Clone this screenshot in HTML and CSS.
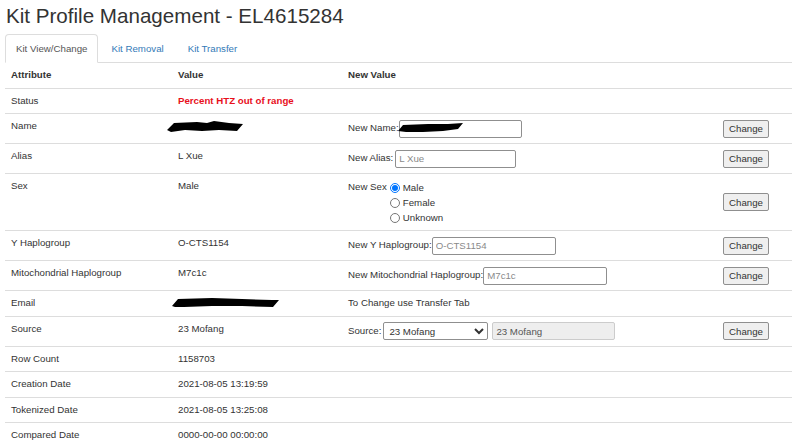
FILE: index.html
```html
<!DOCTYPE html>
<html>
<head>
<meta charset="utf-8">
<link rel="stylesheet" href="styles.css">
</head>
<body>
<div class="page">
  <h1 class="title">Kit Profile Management - EL4615284</h1>
  <ul class="tabs">
    <li class="tab active"><a>Kit View/Change</a></li>
    <li class="tab"><a>Kit Removal</a></li>
    <li class="tab"><a>Kit Transfer</a></li>
  </ul>
  <table class="grid">
    <colgroup>
      <col class="c1"><col class="c2"><col class="c3"><col class="c4">
    </colgroup>
    <thead>
      <tr><th>Attribute</th><th>Value</th><th>New Value</th><th></th></tr>
    </thead>
    <tbody>
      <tr><td>Status</td><td class="bad">Percent HTZ out of range</td><td></td><td></td></tr>
      <tr>
        <td>Name</td>
        <td class="redact-cell"><svg class="blob b1" width="80" height="12" viewBox="0 0 80 12"><polygon points="0,9 7,2 30,1 40,2 47,0 62,2 76,3 70,10 52,9 35,10 18,9 4,11" fill="#000"/></svg></td>
        <td><div class="row"><span>New Name:</span><span class="wrap"><input class="inp w122" type="text"><svg class="blob b2" width="66" height="10" viewBox="0 0 66 10"><polygon points="0,8 5,2 30,1 50,1 65,0 60,6 45,8 25,9 8,9" fill="#000"/></svg></span></div></td>
        <td class="act"><button class="btn">Change</button></td>
      </tr>
      <tr>
        <td>Alias</td><td>L Xue</td>
        <td><div class="row"><span>New Alias:</span><input class="inp w120 gap" type="text" placeholder="L Xue"></div></td>
        <td class="act"><button class="btn">Change</button></td>
      </tr>
      <tr>
        <td>Sex</td><td>Male</td>
        <td>
          <div class="sex">
            <span>New Sex</span>
            <div class="radios">
              <label class="rad"><input type="radio" name="sex" checked> Male</label>
              <label class="rad"><input type="radio" name="sex"> Female</label>
              <label class="rad"><input type="radio" name="sex"> Unknown</label>
            </div>
          </div>
        </td>
        <td class="act"><button class="btn">Change</button></td>
      </tr>
      <tr>
        <td>Y Haplogroup</td><td>O-CTS1154</td>
        <td><div class="row"><span>New Y Haplogroup:</span><input class="inp w123" type="text" placeholder="O-CTS1154"></div></td>
        <td class="act"><button class="btn">Change</button></td>
      </tr>
      <tr>
        <td>Mitochondrial Haplogroup</td><td>M7c1c</td>
        <td><div class="row"><span>New Mitochondrial Haplogroup:</span><input class="inp w123" type="text" placeholder="M7c1c"></div></td>
        <td class="act"><button class="btn">Change</button></td>
      </tr>
      <tr>
        <td>Email</td>
        <td class="redact-cell"><svg class="blob b3" width="108" height="11" viewBox="0 0 108 11"><polygon points="0,9 6,2 40,1 70,2 100,3 107,3 101,10 70,9 40,9 12,10 3,10" fill="#000"/></svg></td>
        <td>To Change use Transfer Tab</td><td></td>
      </tr>
      <tr>
        <td>Source</td><td>23 Mofang</td>
        <td><div class="row"><span>Source:</span><select class="sel"><option>23 Mofang</option></select><input class="inp w122 dis" type="text" value="23 Mofang" disabled></div></td>
        <td class="act"><button class="btn">Change</button></td>
      </tr>
      <tr><td>Row Count</td><td>1158703</td><td></td><td></td></tr>
      <tr><td>Creation Date</td><td>2021-08-05 13:19:59</td><td></td><td></td></tr>
      <tr><td>Tokenized Date</td><td>2021-08-05 13:25:08</td><td></td><td></td></tr>
      <tr><td>Compared Date</td><td>0000-00-00 00:00:00</td><td></td><td></td></tr>
    </tbody>
  </table>
</div>
</body>
</html>
```

FILE: styles.css
```css
html, body {
  margin: 0;
  padding: 0;
  background: #fff;
}
body {
  font-family: "Liberation Sans", Arial, sans-serif;
  font-size: 9.7px;
  color: #333;
}
.page {
  padding: 0 8px 0 5px;
}
.title {
  margin: 3px 0 5px 1px;
  font-size: 20.6px;
  line-height: 26px;
  font-weight: normal;
  color: #333;
}
.tabs {
  list-style: none;
  margin: 0;
  padding: 0;
  display: flex;
  border-bottom: 1px solid #ddd;
}
.tab {
  margin-right: 2px;
  margin-bottom: -1px;
}
.tab a {
  display: block;
  padding: 7px 10px 6px;
  line-height: 14px;
  color: #337ab7;
  border: 1px solid transparent;
  border-radius: 4px 4px 0 0;
}
.tab.active a {
  color: #555;
  background: #fff;
  border-color: #ddd #ddd transparent;
}
.grid {
  width: 787px;
  border-collapse: collapse;
  table-layout: fixed;
}
.c1 { width: 167px; }
.c2 { width: 170px; }
.c3 { width: 375px; }
.c4 { width: 75px; }
.grid th, .grid td {
  padding: 5px 6px;
  line-height: 14.5px;
  text-align: left;
  vertical-align: top;
  border-top: 1px solid #ddd;
}
.grid th {
  font-weight: bold;
  border-top: none;
  border-bottom: 1px solid #ddd;
}
.grid tbody tr:first-child td { border-top: none; }
.grid tbody tr:last-child td { border-bottom: 1px solid #ddd; }
.bad {
  color: #e8101c;
  font-weight: bold;
}
.act { vertical-align: middle !important; }
.row {
  display: flex;
  align-items: center;
  height: 19px;
  gap: 3px;
}
.row > span:first-child { margin-right: -3px; }
.row .gap { margin-left: 2px; }
.redact-cell, .wrap { position: relative; }
.wrap { display: block; line-height: 0; }
.blob { position: absolute; display: block; }
.b1 { left: -5px; top: 7px; }
.b3 { left: 0; top: 6px; }
.b2 { left: -1px; top: 3px; }
.inp {
  box-sizing: border-box;
  height: 18px;
  border: 1px solid #8f8f8f;
  border-radius: 2px;
  padding: 0 3px;
  font-family: "Liberation Sans", Arial, sans-serif;
  font-size: 9.7px;
  color: #333;
  margin: 0;
  background: #fff;
}
.inp::placeholder { color: #8a8a8a; }
.w120 { width: 121px; }
.w122 { width: 123px; }
.w123 { width: 124px; }
.inp.dis {
  background: #eee;
  border-color: #ccc;
  color: #555;
  margin-left: 1px;
}
.sel {
  box-sizing: border-box;
  width: 105px;
  height: 18px;
  font-family: "Liberation Sans", Arial, sans-serif;
  font-size: 9.7px;
  color: #333;
  border: 1px solid #8f8f8f;
  border-radius: 2px;
  margin: 0 0 0 2px;
  padding: 0 1px;
  background: #fff;
}
.btn {
  display: block;
  box-sizing: border-box;
  height: 18px;
  width: 46px;
  padding: 0;
  font-family: "Liberation Sans", Arial, sans-serif;
  font-size: 9.7px;
  color: #333;
  background: #efefef;
  border: 1px solid #8f8f8f;
  border-radius: 2px;
  margin: 0;
}
.sex {
  display: flex;
  align-items: flex-start;
  padding-top: 1px;
}
.radios {
  display: flex;
  flex-direction: column;
  margin-left: 3px;
}
.rad {
  line-height: 15px;
  display: flex;
  align-items: center;
}
.rad input {
  width: 10px;
  height: 10px;
  margin: 0 3px 0 0;
}
```
